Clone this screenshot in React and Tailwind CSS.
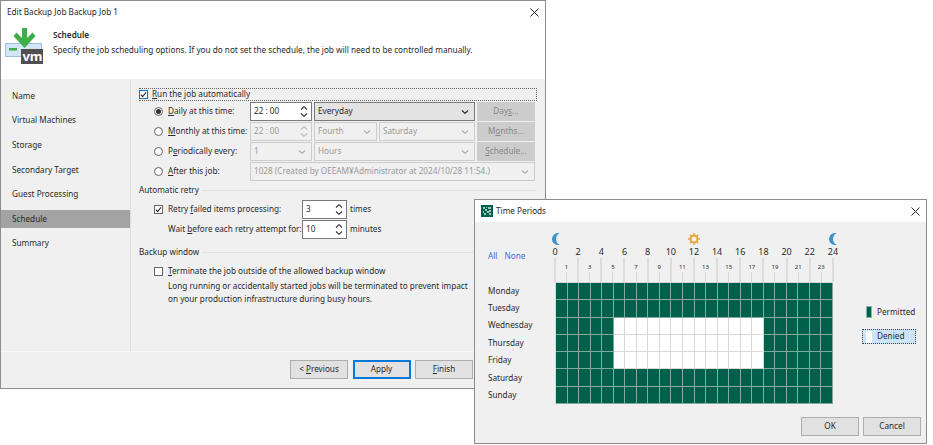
import React from "react";

const navItems = ["Name", "Virtual Machines", "Storage", "Secondary Target", "Guest Processing", "Schedule", "Summary"];
const days = ["Monday", "Tuesday", "Wednesday", "Thursday", "Friday", "Saturday", "Sunday"];
const hours = Array.from({ length: 25 }, (_, i) => i);
const cells = Array.from({ length: 168 }, (_, i) => i);

const Chevron = ({ up, className }) => (
  <svg width="8" height="4" viewBox="0 0 8 4" className={className}>
    <path d={up ? "M1 3.5 L4 .7 L7 3.5" : "M1 .5 L4 3.3 L7 .5"} fill="none" stroke="currentColor" strokeWidth="1.1" />
  </svg>
);

const CloseIcon = ({ className }) => (
  <svg width="9" height="9" viewBox="0 0 9 9" className={className}>
    <path d="M.5 .5 L8.5 8.5 M8.5 .5 L.5 8.5" stroke="#222" strokeWidth="1" fill="none" />
  </svg>
);

const Check = () => (
  <svg width="7" height="7" viewBox="0 0 8 8">
    <path d="M1 4.2 L3 6.4 L7 1.4" fill="none" stroke="#222" strokeWidth="1.2" />
  </svg>
);

const Checkbox = ({ checked, focus }) => (
  <span
    className={`w-[9px] h-[9px] shrink-0 border flex items-center justify-center bg-white ${
      focus ? "border-[#0078d7]" : "border-[#666]"
    }`}
  >
    {checked && <Check />}
  </span>
);

const Radio = ({ checked }) => (
  <span className="w-[9px] h-[9px] shrink-0 rounded-full border border-[#666] bg-white flex items-center justify-center">
    {checked && <span className="w-[5px] h-[5px] rounded-full bg-[#333]" />}
  </span>
);

const Spinner = ({ value, disabled, className }) => (
  <div
    className={`h-[19px] border flex items-center justify-between pl-[3px] pr-[3px] ${className} ${
      disabled ? "border-[#ccc] bg-[#f0f0f0] text-[#9a9a9a]" : "border-[#7a7a7a] bg-white"
    }`}
  >
    <span>{value}</span>
    <span className={`flex flex-col gap-[3px] ${disabled ? "text-[#bbb]" : "text-[#333]"}`}>
      <Chevron up />
      <Chevron />
    </span>
  </div>
);

const Select = ({ value, disabled, className }) => (
  <div
    className={`h-[19px] border flex items-center justify-between pl-[3px] pr-[5px] ${className} ${
      disabled ? "border-[#ccc] bg-[#f0f0f0] text-[#9a9a9a]" : "border-[#7a7a7a] bg-[#e3e3e3]"
    }`}
  >
    <span className="whitespace-nowrap">{value}</span>
    <Chevron className={disabled ? "text-[#aaa]" : "text-[#222]"} />
  </div>
);

const SideButton = ({ children }) => (
  <div className="w-[58px] h-[19px] ml-[2px] bg-[#cccccc] flex items-center justify-center text-[#888]">
    <span>{children}</span>
  </div>
);

const OptionRow = ({ checked, children }) => (
  <div className="flex items-center pl-[15px] h-[19px]">
    <Radio checked={checked} />
    <span className="w-[82px] ml-[5px] whitespace-nowrap">{children}</span>
  </div>
);

const Heading = ({ children, className }) => (
  <div className={`flex items-center gap-[3px] h-[12px] ${className}`}>
    <span className="whitespace-nowrap">{children}</span>
    <span className="flex-1 h-px bg-[#e2e2e2]" />
  </div>
);

const Button = ({ children, primary }) => (
  <div
    className={`w-[58px] h-[19px] flex items-center justify-center bg-[#e1e1e1] ${
      primary ? "border-2 border-[#0078d7]" : "border border-[#adadad]"
    }`}
  >
    <span>{children}</span>
  </div>
);

const Moon = () => (
  <svg width="9" height="12" viewBox="0 0 9 12" className="shrink-0">
    <path d="M8.5 .2 A6 6 0 1 0 8.5 11.8 A6.6 6.6 0 0 1 8.5 .2 Z" fill="#3f93c9" />
  </svg>
);

const Sun = () => (
  <svg width="12" height="12" viewBox="0 0 12 12" className="shrink-0">
    <circle cx="6" cy="6" r="3.5" fill="none" stroke="#e6a135" strokeWidth="2" />
    <path
      d="M6 0 V1.6 M6 10.4 V12 M0 6 H1.6 M10.4 6 H12 M1.8 1.8 L2.8 2.8 M9.2 9.2 L10.2 10.2 M1.8 10.2 L2.8 9.2 M9.2 2.8 L10.2 1.8"
      stroke="#e6a135"
      strokeWidth="1.4"
    />
  </svg>
);

const BackupIcon = () => (
  <svg width="40" height="42" viewBox="0 0 40 42" className="ml-[4px] mt-[-3px] shrink-0">
    <rect x=".5" y="18.5" width="36" height="13" fill="#d3e5f6" stroke="#9cc0dc" />
    <rect x="4" y="23" width="8" height="2.5" fill="#3fae49" />
    <path d="M17 3 H22 V13 L27.5 7.5 L30.5 11 L19.5 23 L8.5 11 L11.5 7.5 L17 13 Z" fill="#3fae49" />
    <rect x="16" y="24" width="22" height="15" fill="#505050" />
    <text x="27.5" y="36" textAnchor="middle" fontSize="13" fontWeight="700" fill="#fff" fontFamily="Noto Sans, sans-serif">
      vm
    </text>
  </svg>
);

const PeriodsIcon = () => (
  <svg width="12" height="12" viewBox="0 0 12 12" className="shrink-0">
    <rect width="12" height="12" fill="#00604b" />
    <path
      d="M2 2 H4 V4 H2 Z M5 2 H6 V3 H5 Z M7 2 H10 V4 H7 Z M4 4 H6 V6 H4 Z M8 5 H10 V7 H8 Z M2 6 H3 V8 H2 Z M6 6 H8 V8 H6 Z M3 8 H5 V10 H3 Z M8 8 H10 V10 H8 Z"
      fill="#9fc9bd"
    />
  </svg>
);

const isDenied = (i) => {
  const row = Math.floor(i / 24);
  const col = i % 24;
  return row >= 2 && row <= 4 && col >= 5 && col < 18;
};

const BackupJobWindow = () => (
  <div className="absolute left-0 top-0 w-[546px] h-[389px] border border-[#8c8c8c] bg-[#f0f0f0] flex flex-col">
    <div className="h-[78px] bg-white flex flex-col shrink-0">
      <div className="h-[22px] flex items-center justify-between pl-[6px] pr-[6px]">
        <span>Edit Backup Job Backup Job 1</span>
        <CloseIcon />
      </div>
      <div className="flex mt-[5px]">
        <BackupIcon />
        <div className="ml-[8px]">
          <div className="font-semibold leading-[14px]">Schedule</div>
          <div className="leading-[14px] mt-[1px] whitespace-nowrap">
            Specify the job scheduling options. If you do not set the schedule, the job will need to be controlled manually.
          </div>
        </div>
      </div>
    </div>

    <div className="flex flex-1 min-h-0">
      <div className="w-[129px] shrink-0 pt-[8px] flex flex-col gap-[6.6px]">
        {navItems.map((item) => (
          <div key={item} className={`h-[18px] pl-[11px] flex items-center ${item === "Schedule" ? "bg-[#a3a3a3]" : ""}`}>
            {item}
          </div>
        ))}
      </div>

      <div className="w-px bg-[#dcdcdc] shrink-0" />

      <div className="flex-1 min-w-0 pl-[8px] pr-[8px] pt-[9px] flex flex-col">
        <div className="h-[13px] flex items-center gap-[4px] border border-dotted border-[#666] border-l-0">
          <Checkbox checked focus />
          <span>
            <u>R</u>un the job automatically
          </span>
        </div>

        <div className="flex flex-col gap-px mt-[1px]">
          <div className="flex">
            <OptionRow checked>
              <u>D</u>aily at this time:
            </OptionRow>
            <Spinner value="22 : 00" className="w-[62px]" />
            <Select value="Everyday" className="w-[161px] ml-[2px]" />
            <SideButton>
              Day<u>s</u>...
            </SideButton>
          </div>
          <div className="flex">
            <OptionRow>
              <u>M</u>onthly at this time:
            </OptionRow>
            <Spinner value="22 : 00" disabled className="w-[62px]" />
            <Select value="Fourth" disabled className="w-[63px] ml-[2px]" />
            <Select value="Saturday" disabled className="w-[96px] ml-[2px]" />
            <SideButton>
              M<u>o</u>nths...
            </SideButton>
          </div>
          <div className="flex">
            <OptionRow>
              P<u>e</u>riodically every:
            </OptionRow>
            <Select value="1" disabled className="w-[62px]" />
            <Select value="Hours" disabled className="w-[161px] ml-[2px]" />
            <SideButton>
              <u>S</u>chedule...
            </SideButton>
          </div>
          <div className="flex">
            <OptionRow>
              <u>A</u>fter this job:
            </OptionRow>
            <Select value="1028 (Created by OEEAM¥Administrator at 2024/10/28 11:54.)" disabled className="w-[285px]" />
          </div>
        </div>

        <Heading className="mt-[3px]">Automatic retry</Heading>

        <div className="flex items-center pl-[15px] mt-[3px] h-[20px]">
          <Checkbox checked />
          <span className="w-[134px] ml-[5px] whitespace-nowrap">
            Retry <u>f</u>ailed items processing:
          </span>
          <Spinner value="3" className="w-[45px]" />
          <span className="ml-[3px]">times</span>
        </div>
        <div className="flex items-center pl-[29px] mt-[1px] h-[19px]">
          <span className="w-[134px] whitespace-nowrap">
            Wait <u>b</u>efore each retry attempt for:
          </span>
          <Spinner value="10" className="w-[45px]" />
          <span className="ml-[3px]">minutes</span>
        </div>

        <Heading className="mt-[7px]">Backup window</Heading>

        <div className="flex items-center pl-[15px] mt-[7px] h-[12px]">
          <Checkbox />
          <span className="ml-[5px]">
            <u>T</u>erminate the job outside of the allowed backup window
          </span>
        </div>
        <div className="pl-[29px] mt-[3px] leading-[12.5px] whitespace-nowrap">
          Long running or accidentally started jobs will be terminated to prevent impact
          <br />
          on your production infrastructure during busy hours.
        </div>
      </div>
    </div>

    <div className="h-[37px] shrink-0 border-t border-[#f8f8f8] flex gap-[4.5px] pl-[289px] pt-[8px]">
      <Button>
        &lt; <u>P</u>revious
      </Button>
      <Button primary>Apply</Button>
      <Button>
        <u>F</u>inish
      </Button>
    </div>
  </div>
);

const TimePeriodsWindow = () => (
  <div className="absolute left-[474px] top-[199px] w-[453px] h-[245px] border border-[#8c8c8c] bg-[#f0f0f0] flex flex-col">
    <div className="h-[22px] bg-white flex items-center pl-[6px] pr-[6px] shrink-0">
      <PeriodsIcon />
      <span className="ml-[3px]">Time Periods</span>
      <CloseIcon className="ml-auto" />
    </div>

    <div className="flex flex-1 min-h-0">
      <div className="w-[80px] shrink-0 pl-[13px]">
        <div className="flex gap-[7px] mt-[28px] h-[12px] items-center text-[#3b6fe0]">
          <span>All</span>
          <span>None</span>
        </div>
        <div className="mt-[20px] flex flex-col">
          {days.map((day) => (
            <div key={day} className="h-[17.4px] flex items-center">
              {day}
            </div>
          ))}
        </div>
      </div>

      <div className="w-[278px] shrink-0">
        <div className="h-[60px] flex justify-between items-end">
          {hours.map((h) => (
            <div key={h} className="w-0 flex flex-col items-center">
              {h === 0 || h === 24 ? <Moon /> : null}
              {h === 12 ? <Sun /> : null}
              {h % 2 === 0 ? (
                <>
                  <span className="text-[9px] leading-[12px] mt-[1px]">{h}</span>
                  <span className="w-[2px] h-[24px] bg-[#dcdcdc] shrink-0" />
                </>
              ) : (
                <>
                  <span className="text-[6px] leading-[8px] mb-[1px]">{h}</span>
                  <span className="w-[1px] h-[10px] bg-[#d6d6d6] shrink-0" />
                </>
              )}
            </div>
          ))}
        </div>
        <div className="h-[122px] grid grid-cols-[repeat(24,1fr)] grid-rows-[repeat(7,1fr)] border-l border-t border-[#d8d8d8]">
          {cells.map((i) => (
            <div
              key={i}
              className={
                isDenied(i)
                  ? "bg-white border-r border-b border-[#d9d9d9]"
                  : "bg-[#00604b] border-r border-b border-[#7fa99d]"
              }
            />
          ))}
        </div>
      </div>

      <div className="flex-1 pl-[29px] pt-[84px]">
        <div className="flex items-center h-[12px] pl-[4px]">
          <span className="w-[6px] h-[12px] bg-[#00604b] border border-[#8fb5a9]" />
          <span className="ml-[5px]">Permitted</span>
        </div>
        <div className="mt-[11px] w-[54px] h-[15px] border border-dotted border-[#444] bg-[#cce4f7] flex items-center pl-[3px]">
          <span className="w-[6px] h-[12px] bg-white" />
          <span className="ml-[5px]">Denied</span>
        </div>
      </div>
    </div>

    <div className="h-[26px] shrink-0 flex justify-end gap-[4px] pr-[5px]">
      <Button>OK</Button>
      <Button>Cancel</Button>
    </div>
  </div>
);

const App = () => (
  <div className="relative w-[933px] h-[445px] overflow-hidden bg-white text-[#2a2a2a] text-[8.2px] font-['Noto_Sans',sans-serif]">
    <BackupJobWindow />
    <TimePeriodsWindow />
  </div>
);

export default App;
